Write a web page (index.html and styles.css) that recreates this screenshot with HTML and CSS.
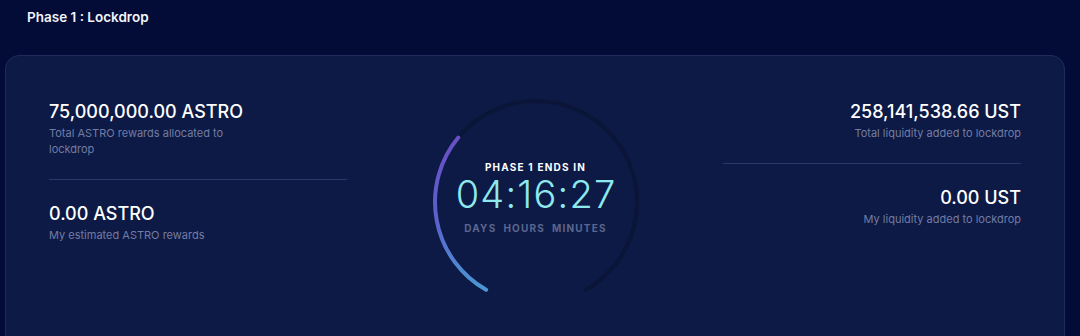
FILE: index.html
```html
<!DOCTYPE html>
<html>
<head>
<meta charset="utf-8">
<link rel="stylesheet" href="styles.css">
</head>
<body>
<h1 class="title">Phase 1 : Lockdrop</h1>
<section class="card">
  <div class="col col-left">
    <div class="item">
      <div class="value">75,000,000.00 ASTRO</div>
      <div class="label label-narrow">Total ASTRO rewards allocated to lockdrop</div>
    </div>
    <div class="divider"></div>
    <div class="item">
      <div class="value">0.00 ASTRO</div>
      <div class="label">My estimated ASTRO rewards</div>
    </div>
  </div>
  <div class="col col-center">
    <div class="gauge">
      <svg class="ring" width="210" height="210" viewBox="0 0 210 210">
        <defs>
          <linearGradient id="prog" x1="0" y1="40" x2="0" y2="193" gradientUnits="userSpaceOnUse">
            <stop offset="0" stop-color="#6a4ec6"/>
            <stop offset="0.55" stop-color="#5a62cc"/>
            <stop offset="1" stop-color="#4b98d4"/>
          </linearGradient>
        </defs>
        <path d="M55.1,192.8 A101,101 0 1 1 154.9,192.8" fill="none" stroke="#0a1537" stroke-width="4" stroke-linecap="round"/>
        <path d="M55.1,192.8 A101,101 0 0 1 27.3,40.5" fill="none" stroke="url(#prog)" stroke-width="4" stroke-linecap="round"/>
      </svg>
      <div class="countdown">
        <div class="ends">PHASE 1 ENDS IN</div>
        <div class="time">04:16:27</div>
        <div class="units"><span>DAYS</span><span>HOURS</span><span>MINUTES</span></div>
      </div>
    </div>
  </div>
  <div class="col col-right">
    <div class="item">
      <div class="value">258,141,538.66 UST</div>
      <div class="label">Total liquidity added to lockdrop</div>
    </div>
    <div class="divider"></div>
    <div class="item">
      <div class="value">0.00 UST</div>
      <div class="label">My liquidity added to lockdrop</div>
    </div>
  </div>
</section>
</body>
</html>
```
FILE: styles.css
```css
html, body {
  margin: 0;
  padding: 0;
  height: 336px;
  overflow: hidden;
  background: #020c36;
  font-family: Inter, "Noto Sans", sans-serif;
  color: #ffffff;
}

.title {
  margin: 0;
  padding: 7px 27px 0;
  font-size: 13.5px;
  line-height: 20px;
  font-weight: 600;
  color: #f2f4fa;
}

.card {
  margin: 28px 0 0 5px;
  width: 1060px;
  min-height: 320px;
  box-sizing: border-box;
  background: #0d1a45;
  border: 1px solid #1f2b5a;
  border-radius: 14px;
  padding: 22px 43px;
  display: grid;
  grid-template-columns: 298px 1fr 298px;
  align-items: start;
}

.col-right {
  text-align: right;
}

.item {
  padding: 21px 0 22px;
}

.value {
  font-size: 18px;
  line-height: 26px;
  font-weight: 500;
  color: #ffffff;
}

.label {
  font-size: 11px;
  line-height: 16px;
  color: #737ca3;
}

.label-narrow {
  max-width: 190px;
}

.divider {
  height: 1px;
  background: #2c3868;
}

.col-center {
  display: flex;
  justify-content: center;
  padding-top: 19px;
}

.gauge {
  display: grid;
  width: 210px;
  height: 210px;
  margin-left: 1px;
}

.ring,
.countdown {
  grid-area: 1 / 1;
}

.countdown {
  display: flex;
  flex-direction: column;
  align-items: center;
  padding-top: 63px;
}

.ends {
  font-size: 10px;
  line-height: 14px;
  font-weight: 700;
  letter-spacing: 1.2px;
  color: #ffffff;
}

.time {
  font-size: 38px;
  line-height: 40px;
  font-weight: 300;
  color: #8ee9ef;
  letter-spacing: 1.2px;
  margin-right: -1.2px;
}

.units {
  margin-top: 7px;
  display: flex;
  gap: 7px;
  font-size: 10px;
  line-height: 14px;
  font-weight: 700;
  letter-spacing: 1.2px;
  color: #5a668f;
}
```
